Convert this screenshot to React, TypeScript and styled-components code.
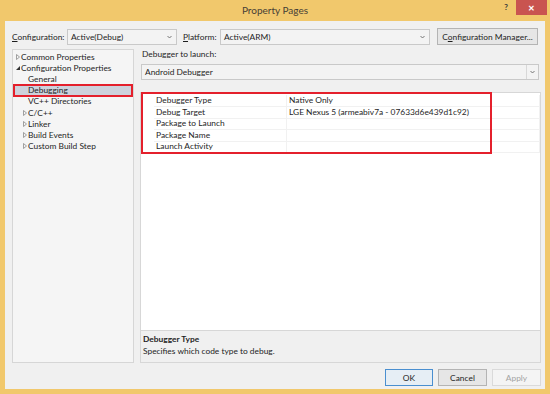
import React from "react";
import styled, { createGlobalStyle } from "styled-components";

const GlobalStyle = createGlobalStyle`
  html, body { margin: 0; padding: 0; }
  body {
    font-family: "Segoe UI", Lato, "Noto Sans", sans-serif;
    font-size: 8.4px;
    color: #1e1e1e;
  }
`;

const Window = styled.div`
  width: 550px;
  height: 394px;
  background: #f1c86c;
  display: flex;
  flex-direction: column;
  box-sizing: border-box;
`;

const TitleBar = styled.div`
  height: 21px;
  display: grid;
  grid-template-columns: 1fr auto 1fr;
  align-items: start;
`;

const Title = styled.div`
  grid-column: 2;
  font-size: 10px;
  color: #474036;
  padding-top: 4px;
`;

const Controls = styled.div`
  grid-column: 3;
  justify-self: end;
  display: flex;
  align-items: flex-start;
  padding-right: 3px;
`;

const Help = styled.div`
  font-size: 8px;
  font-weight: bold;
  color: #3a3a3a;
  margin: 2px 8px 0 0;
`;

const CloseBtn = styled.div`
  width: 31px;
  height: 15px;
  background: #c95450;
  color: #fff;
  display: flex;
  align-items: center;
  justify-content: center;
  font-size: 8px;
  font-weight: bold;
`;

const Client = styled.div`
  flex: 1;
  margin: 0 5px 5px;
  background: #f0f0f0;
  display: flex;
  flex-direction: column;
  padding: 7px 4px 3px 0;
`;

const TopRow = styled.div`
  display: flex;
  align-items: center;
  height: 17px;
  padding-left: 7px;
`;

const Label = styled.div<{ $w: number }>`
  width: ${(p) => p.$w}px;
  flex: none;
  white-space: nowrap;
`;

const Combo = styled.div<{ $w?: number }>`
  ${(p) => (p.$w ? `width: ${p.$w}px; flex: none;` : "flex: 1;")}
  height: 16px;
  box-sizing: border-box;
  border: 1px solid #c9c9c9;
  background: #f3f3f3;
  display: flex;
  align-items: center;
  padding: 0 4px 0 3px;
`;

const ComboText = styled.div`
  flex: 1;
  white-space: nowrap;
`;

const Chevron = () => (
  <svg width="5" height="4" viewBox="0 0 5 4">
    <polyline points="0.5,1 2.5,3 4.5,1" fill="none" stroke="#6a6a6a" strokeWidth="0.9" />
  </svg>
);

const ChevronBox = styled.div`
  width: 11px;
  height: 14px;
  margin-right: -4px;
  border-left: 1px solid #d8d8d8;
  display: flex;
  align-items: center;
  justify-content: center;
`;

const Button = styled.div<{ $w: number; $kind?: "default" | "disabled" }>`
  width: ${(p) => p.$w}px;
  height: 17px;
  flex: none;
  box-sizing: border-box;
  display: flex;
  align-items: center;
  justify-content: center;
  border: 1px solid
    ${(p) => (p.$kind === "default" ? "#4a8fd0" : p.$kind === "disabled" ? "#dadada" : "#b4b4b4")};
  background: ${(p) =>
    p.$kind === "default" ? "#e6eef5" : p.$kind === "disabled" ? "#f4f4f4" : "#e6e6e6"};
  color: ${(p) => (p.$kind === "disabled" ? "#a3a3a3" : "#1e1e1e")};
  white-space: nowrap;
`;

const Body = styled.div`
  flex: 1;
  display: flex;
  margin-top: 4px;
  padding-left: 7px;
`;

const Tree = styled.div`
  width: 122px;
  box-sizing: border-box;
  border: 1px solid #d6d6d6;
  background: #f5f5f5;
  padding-top: 1px;
`;

const TreeRow = styled.div<{ $level: number; $selected?: boolean }>`
  height: 11.2px;
  display: flex;
  align-items: center;
  padding-left: ${(p) => 2 + p.$level * 7}px;
  margin: 0 1px;
  white-space: nowrap;
  background: ${(p) => (p.$selected ? "#cdd2dc" : "transparent")};
  outline: ${(p) => (p.$selected ? "2px solid #e4202c" : "none")};
  outline-offset: -1px;
`;

const Expander = styled.span`
  width: 5px;
  flex: none;
  display: flex;
  align-items: center;
`;

const Collapsed = () => (
  <svg width="4" height="6" viewBox="0 0 4 6">
    <polygon points="0.5,0.5 3.5,3 0.5,5.5" fill="none" stroke="#8a8a8a" strokeWidth="0.8" />
  </svg>
);

const Expanded = () => (
  <svg width="4" height="4" viewBox="0 0 4 4">
    <polygon points="4,0 4,4 0,4" fill="#333" />
  </svg>
);

const Right = styled.div`
  flex: 1;
  margin-left: 6px;
  display: flex;
  flex-direction: column;
`;

const Caption = styled.div`
  height: 11px;
  line-height: 11px;
  padding-left: 2px;
`;

const WideCombo = styled(Combo)`
  flex: none;
  margin: 4px 2px 0 1px;
`;

const Grid = styled.div`
  flex: 1;
  margin-top: 12px;
  border: 1px solid #d7d7d7;
  display: flex;
  flex-direction: column;
`;

const Rows = styled.div`
  flex: 1;
  background: #fff;
  padding-top: 2px;
`;

const Marked = styled.div`
  position: relative;
`;

const RedBox = styled.div`
  position: absolute;
  left: 0;
  top: -3px;
  width: 351px;
  bottom: -1px;
  border: 2px solid #e4202c;
  box-sizing: border-box;
  pointer-events: none;
`;

const PropRow = styled.div`
  display: grid;
  grid-template-columns: 13px 133px 1fr;
  height: 11.5px;
`;

const Gutter = styled.div`
  background: #fff;
`;

const Cell = styled.div`
  padding-left: 2px;
  line-height: 11px;
  border-bottom: 0.5px solid #f1f1f1;
  border-right: 0.5px solid #f1f1f1;
  white-space: nowrap;
`;

const Desc = styled.div`
  height: 32px;
  box-sizing: border-box;
  border-top: 1px solid #d7d7d7;
  background: #f0f0f0;
  padding: 2px 2px 0;
  line-height: 12px;
`;

const DescTitle = styled.div`
  font-weight: bold;
`;

const Footer = styled.div`
  display: flex;
  justify-content: flex-end;
  gap: 5px;
  margin-top: 6px;
`;

const tree = [
  { label: "Common Properties", level: 0, icon: "c" },
  { label: "Configuration Properties", level: 0, icon: "e" },
  { label: "General", level: 1 },
  { label: "Debugging", level: 1, selected: true },
  { label: "VC++ Directories", level: 1 },
  { label: "C/C++", level: 1, icon: "c" },
  { label: "Linker", level: 1, icon: "c" },
  { label: "Build Events", level: 1, icon: "c" },
  { label: "Custom Build Step", level: 1, icon: "c" },
];

const props = [
  ["Debugger Type", "Native Only"],
  ["Debug Target", "LGE Nexus 5 (armeabiv7a - 07633d6e439d1c92)"],
  ["Package to Launch", ""],
  ["Package Name", ""],
  ["Launch Activity", ""],
];

export default function App() {
  return (
    <Window>
      <GlobalStyle />
      <TitleBar>
        <Title>Property Pages</Title>
        <Controls>
          <Help>?</Help>
          <CloseBtn>✕</CloseBtn>
        </Controls>
      </TitleBar>
      <Client>
        <TopRow>
          <Label $w={55}>
            <u>C</u>onfiguration:
          </Label>
          <Combo $w={110}>
            <ComboText>Active(Debug)</ComboText>
            <Chevron />
          </Combo>
          <Label $w={37} style={{ marginLeft: 6 }}>
            <u>P</u>latform:
          </Label>
          <Combo $w={210}>
            <ComboText>Active(ARM)</ComboText>
            <Chevron />
          </Combo>
          <Button $w={101} style={{ marginLeft: 7 }}>
            C<u>o</u>nfiguration Manager...
          </Button>
        </TopRow>
        <Body>
          <Tree>
            {tree.map((t) => (
              <TreeRow key={t.label} $level={t.level} $selected={t.selected}>
                <Expander>
                  {t.icon === "c" && <Collapsed />}
                  {t.icon === "e" && <Expanded />}
                </Expander>
                {t.label}
              </TreeRow>
            ))}
          </Tree>
          <Right>
            <Caption>Debugger to launch:</Caption>
            <WideCombo>
              <ComboText>Android Debugger</ComboText>
              <ChevronBox>
                <Chevron />
              </ChevronBox>
            </WideCombo>
            <Grid>
              <Rows>
                <Marked>
                  {props.map(([name, value]) => (
                    <PropRow key={name}>
                      <Gutter />
                      <Cell>{name}</Cell>
                      <Cell>{value}</Cell>
                    </PropRow>
                  ))}
                  <RedBox />
                </Marked>
              </Rows>
              <Desc>
                <DescTitle>Debugger Type</DescTitle>
                <div>Specifies which code type to debug.</div>
              </Desc>
            </Grid>
          </Right>
        </Body>
        <Footer>
          <Button $w={48} $kind="default">
            OK
          </Button>
          <Button $w={49}>Cancel</Button>
          <Button $w={49} $kind="disabled">
            Apply
          </Button>
        </Footer>
      </Client>
    </Window>
  );
}
